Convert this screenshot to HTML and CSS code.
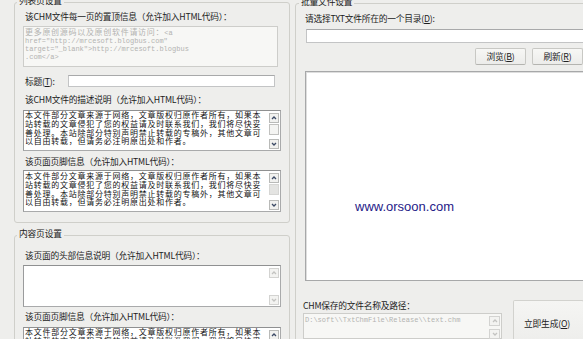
FILE: index.html
```html
<!DOCTYPE html>
<html lang="zh-CN">
<head>
<meta charset="utf-8">
<title>TxtChm</title>
<link rel="stylesheet" href="styles.css">
</head>
<body>
<div class="app">
  <div class="left">
    <fieldset class="group g1">
      <legend>列表页设置</legend>
      <div class="lbl l1">该CHM文件每一页的置顶信息（允许加入HTML代码）：</div>
      <div class="ta ta-off ta1"><div class="mono"><span class="cjk">更多原创源码以及原创软件请访问：</span>&lt;a<br>href="http://mrcesoft.blogbus.com"<br>target="_blank"&gt;http://mrcesoft.blogbus<br>.com&lt;/a&gt;</div></div>
      <div class="title-row">
        <span class="lbl title-lbl">标题(<u>T</u>):</span>
        <div class="input title-input"></div>
      </div>
      <div class="lbl l3">该CHM文件的描述说明（允许加入HTML代码）：</div>
      <div class="ta memo ta3">
        <div class="memo-text">本文件部分文章来源于网络，文章版权归原作者所有，如果本<br>站转载的文章侵犯了您的权益请及时联系我们，我们将尽快妥<br>善处理。本站除部分特别声明禁止转载的专稿外，其他文章可<br>以自由转载，但请务必注明原出处和作者。</div>
        <div class="sb">
          <div class="sb-btn"><svg viewBox="0 0 8 8"><polyline points="2,5 4,3 6,5"/></svg></div>
          <div class="sb-track"><div class="sb-thumb"></div></div>
          <div class="sb-btn"><svg viewBox="0 0 8 8"><polyline points="2,3 4,5 6,3"/></svg></div>
        </div>
      </div>
      <div class="lbl l4">该页面页脚信息（允许加入HTML代码）：</div>
      <div class="ta memo ta4">
        <div class="memo-text">本文件部分文章来源于网络，文章版权归原作者所有，如果本<br>站转载的文章侵犯了您的权益请及时联系我们，我们将尽快妥<br>善处理。本站除部分特别声明禁止转载的专稿外，其他文章可<br>以自由转载，但请务必注明原出处和作者。</div>
        <div class="sb">
          <div class="sb-btn"><svg viewBox="0 0 8 8"><polyline points="2,5 4,3 6,5"/></svg></div>
          <div class="sb-track"><div class="sb-thumb light"></div></div>
          <div class="sb-btn"><svg viewBox="0 0 8 8"><polyline points="2,3 4,5 6,3"/></svg></div>
        </div>
      </div>
    </fieldset>

    <fieldset class="group g2">
      <legend>内容页设置</legend>
      <div class="lbl l5">该页面的头部信息说明（允许加入HTML代码）：</div>
      <div class="ta memo ta5">
        <div class="memo-text"></div>
        <div class="sb sb-off">
          <div class="sb-btn"><svg viewBox="0 0 8 8"><polyline points="2,5 4,3 6,5"/></svg></div>
          <div class="sb-track"></div>
          <div class="sb-btn"><svg viewBox="0 0 8 8"><polyline points="2,3 4,5 6,3"/></svg></div>
        </div>
      </div>
      <div class="lbl l6">该页面页脚信息（允许加入HTML代码）：</div>
      <div class="ta memo ta6">
        <div class="memo-text">本文件部分文章来源于网络，文章版权归原作者所有，如果本<br>站转载的文章侵犯了您的权益请及时联系我们，我们将尽快妥<br>善处理。本站除部分特别声明禁止转载的专稿外，其他文章可<br>以自由转载，但请务必注明原出处和作者。</div>
        <div class="sb">
          <div class="sb-btn"><svg viewBox="0 0 8 8"><polyline points="2,5 4,3 6,5"/></svg></div>
          <div class="sb-track"><div class="sb-thumb"></div></div>
          <div class="sb-btn"><svg viewBox="0 0 8 8"><polyline points="2,3 4,5 6,3"/></svg></div>
        </div>
      </div>
    </fieldset>
  </div>

  <div class="right">
    <fieldset class="group g3">
      <legend>批量文件设置</legend>
      <div class="lbl r1">请选择TXT文件所在的一个目录(<u>D</u>):</div>
      <div class="input dir-input"></div>
      <div class="btn-row">
        <button class="btn">浏览(<u>B</u>)</button>
        <button class="btn">刷新(<u>R</u>)</button>
      </div>
      <div class="listbox"><span class="watermark">www.orsoon.com</span></div>
      <div class="bottom-row">
        <div class="save-col">
          <div class="lbl save-lbl">CHM保存的文件名称及路径：</div>
          <div class="ta ta-off path-box">
            <div class="mono path-text">D:\soft\\TxtChmFile\Release\\text.chm</div>
            <div class="sb sb-off">
              <div class="sb-btn"><svg viewBox="0 0 8 8"><polyline points="2,5 4,3 6,5"/></svg></div>
              <div class="sb-track"></div>
              <div class="sb-btn"><svg viewBox="0 0 8 8"><polyline points="2,3 4,5 6,3"/></svg></div>
            </div>
          </div>
        </div>
        <button class="btn btn-big">立即生成(<u>O</u>)</button>
      </div>
    </fieldset>
  </div>
</div>
</body>
</html>
```

FILE: styles.css
```css
html, body {
  margin: 0;
  padding: 0;
  height: 100%;
  overflow: hidden;
  background: #eeeeec;
}

body {
  font-family: "Noto Sans CJK SC", "Noto Sans", sans-serif;
  font-size: 8.75px;
  color: #1e1e1e;
}

u { text-decoration: underline; }

.app {
  display: flex;
  height: 339px;
  overflow: hidden;
}

.left {
  flex: none;
  width: 295px;
  padding-left: 14px;
  box-sizing: border-box;
  display: flex;
  flex-direction: column;
  overflow: hidden;
}

.right {
  flex: none;
  width: 298px;
  overflow: hidden;
}

.group {
  margin: 0;
  min-width: 0;
  border: 1px solid #cfcfca;
  border-radius: 3px;
  box-sizing: border-box;
  display: flex;
  flex-direction: column;
}

.group legend {
  padding: 0 2px 3px;
  margin-left: -6px;
  line-height: 9px;
  font-size: 8.75px;
  letter-spacing: -0.2px;
  color: #222;
}

.g1 {
  margin-top: -4px;
  width: 276px;
  height: 227px;
  flex: none;
  padding: 0 7px 0 8px;
}

.g2 {
  margin-top: 6px;
  width: 276px;
  height: 130px;
  flex: none;
  padding: 0 7px 0 8px;
}

.g3 {
  margin-top: -3px;
  width: 298px;
  height: 360px;
  padding: 0 8px 0 9px;
}

.lbl {
  line-height: 9px;
  letter-spacing: -0.25px;
  white-space: nowrap;
  padding-left: 2px;
  color: #1c1c1c;
}

.l1 { margin-top: 3.5px; }
.l3 { margin-top: 7.5px; }
.l4 { margin-top: 6px; }
.l5 { margin-top: 10px; }
.l6 { margin-top: 4.5px; }

.ta {
  box-sizing: border-box;
  border: 1px solid #a9aaab;
  border-top-color: #8f9091;
  border-left-color: #9a9b9c;
  background: #fff;
  display: flex;
  flex: none;
}

.ta-off {
  background: #f7f7f5;
  border-color: #cdcdca;
}

.mono {
  font-family: "Liberation Mono", "Noto Sans CJK SC", monospace;
  font-size: 7px;
  line-height: 8px;
  color: #b3b3b1;
  white-space: nowrap;
}

.mono .cjk {
  font-family: "Noto Sans CJK SC", sans-serif;
  font-size: 8px;
  letter-spacing: 0.7px;
}

.ta1 {
  margin-top: 5.5px;
  width: 255px;
  height: 41px;
  padding: 1px 0 0 1px;
}

.title-row {
  margin-top: 8px;
  display: flex;
  align-items: center;
  height: 12px;
  flex: none;
}

.title-lbl {
  width: 45px;
  box-sizing: border-box;
}

.input {
  box-sizing: border-box;
  background: #fff;
  border: 1px solid #c3c4c5;
  border-top-color: #a8a9aa;
  flex: none;
}

.title-input {
  width: 207px;
  height: 12px;
}

.memo {
  width: 258px;
  height: 41px;
}

.memo-text {
  flex: 1;
  padding: 0 0 0 1px;
  font-size: 8px;
  letter-spacing: 0.75px;
  line-height: 8.75px;
  white-space: nowrap;
  color: #111;
}

.ta3 { margin-top: 6.5px; }
.ta4 { margin-top: 4px; height: 42px; }
.ta4 .memo-text { padding-top: 1px; }
.ta5 { margin-top: 5px; height: 42px; }
.ta6 { margin-top: 6.5px; height: 42px; }

.sb {
  flex: none;
  width: 10px;
  margin: 2px 1px 1px 4px;
  display: flex;
  flex-direction: column;
}

.sb-btn {
  height: 10px;
  box-sizing: border-box;
  border: 1px solid #b9bab8;
  background: #f1f1ef;
  display: flex;
  align-items: center;
  justify-content: center;
}

.sb-btn svg {
  width: 8px;
  height: 8px;
}

.sb-btn polyline {
  fill: none;
  stroke: #3c4a66;
  stroke-width: 1.3;
}

.sb-track {
  flex: 1;
  padding: 1px 0 2px;
}

.sb-thumb {
  height: 11px;
  box-sizing: border-box;
  border: 1px solid #c1c1bf;
  background: #f4f4f2;
}

.sb-thumb.light {
  background: #e4e4e2;
  border-color: #d6d6d4;
}

.sb-off .sb-btn {
  border-color: #d3d3d1;
  background: #f3f3f1;
}

.sb-off polyline {
  stroke: #c3c3c1;
}

/* right panel */
.r1 {
  margin-top: 5px;
  padding-left: 0;
}

.dir-input {
  margin-top: 6px;
  margin-left: 1px;
  height: 14px;
}

.btn-row {
  margin-top: 5px;
  display: flex;
  justify-content: flex-end;
  gap: 6px;
  padding-right: 1px;
}

.btn {
  font-family: inherit;
  font-size: 8.75px;
  color: #222;
  letter-spacing: -0.2px;
  margin: 0;
  padding: 0;
  width: 51px;
  height: 17px;
  box-sizing: border-box;
  border: 1px solid #c8c8c4;
  border-bottom-color: #b4b4b0;
  border-radius: 2px;
  background: linear-gradient(#f7f7f5, #ececea);
  line-height: 9px;
}

.listbox {
  margin-top: 6px;
  height: 210px;
  box-sizing: border-box;
  background: #fff;
  border: 1px solid #a7a8a9;
  border-right: none;
  box-shadow: inset 1px 1px 0 #dedede;
  padding: 127px 0 0 49px;
}

.watermark {
  font-family: "Liberation Sans", Arial, sans-serif;
  font-size: 13px;
  line-height: 15px;
  color: #1f2188;
}

.bottom-row {
  margin-top: 19px;
  display: flex;
  gap: 11px;
  margin-left: -2px;
}

.save-col {
  width: 199px;
  flex: none;
}

.save-lbl {
  margin-top: 0.5px;
  padding-left: 0;
}

.path-box {
  margin-top: 3.5px;
  height: 26px;
}

.path-text {
  flex: 1;
  padding: 2px 0 0 1px;
  overflow: hidden;
}

.path-box .sb {
  margin: 2px 1px 0 2px;
  width: 11px;
}

.btn-big {
  width: 75px;
  height: 39px;
  border-color: #d2d2ce;
  border-bottom: none;
  border-radius: 2px 2px 0 0;
  background: linear-gradient(#f5f5f3, #eeeeec);
  padding-top: 6px;
  text-align: left;
  padding-left: 10px;
}
```
